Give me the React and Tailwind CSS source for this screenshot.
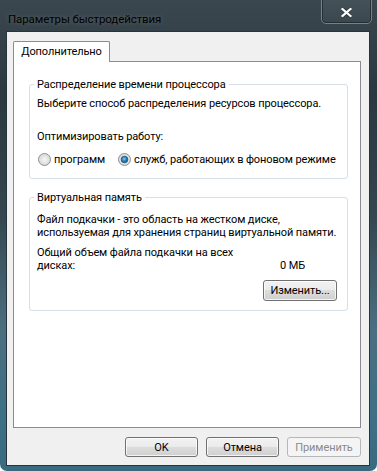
import React from "react";

function Radio({ checked }) {
  return (
    <svg width="13" height="13" viewBox="0 0 13 13" className="shrink-0">
      <defs>
        <radialGradient id={checked ? "rgc" : "rgu"} cx="0.5" cy="0.5" r="0.6">
          <stop offset="0" stopColor="#f6f6f6" />
          <stop offset="0.7" stopColor="#dcdcdc" />
          <stop offset="1" stopColor="#f2f2f2" />
        </radialGradient>
        <radialGradient id="dot" cx="0.45" cy="0.4" r="0.6">
          <stop offset="0" stopColor="#8fd0f5" />
          <stop offset="0.5" stopColor="#2f86c3" />
          <stop offset="1" stopColor="#1b5a8e" />
        </radialGradient>
      </defs>
      <circle cx="6.5" cy="6.5" r="6" fill={`url(#${checked ? "rgc" : "rgu"})`} stroke="#8d8f91" strokeWidth="1" />
      {checked && <circle cx="6.5" cy="6.5" r="3.3" fill="url(#dot)" stroke="#1f4e7a" strokeWidth="0.8" />}
    </svg>
  );
}

export default function App() {
  return (
    <div className="w-[377px] h-[471px] bg-white font-['Roboto',sans-serif] text-[11px] tracking-[-0.1px] leading-[13px] text-black whitespace-nowrap">
      <div className="relative w-[377px] h-[471px] flex flex-col pl-[6px] pr-[7px] rounded-b-[7px] bg-[linear-gradient(180deg,#3a474e_0%,#2b383f_20%,#33454e_45%,#4b6f80_70%,#3d6f86_90%,#3a6a80_100%)]">
        <div className="h-[31px] pl-[2px] pt-[12px] text-[11.5px] leading-[15px] text-black [text-shadow:0_0_5px_rgba(200,190,180,0.35)]">
          Параметры быстродействия
        </div>
        <div className="absolute right-[5px] top-[-2px] w-[51px] h-[26px] rounded-b-[5px] border border-[#75828a] bg-[linear-gradient(180deg,rgba(255,255,255,0.06),rgba(255,255,255,0.02))] shadow-[inset_0_0_0_1px_rgba(20,30,35,0.6)] flex items-center justify-center pt-[2px]">
          <svg width="11" height="9" viewBox="0 0 11 9">
            <path d="M1.5 1 L9.5 8 M9.5 1 L1.5 8" stroke="#2a3338" strokeWidth="3.6" strokeLinecap="square" />
            <path d="M1.5 1 L9.5 8 M9.5 1 L1.5 8" stroke="#ffffff" strokeWidth="2.2" strokeLinecap="square" />
          </svg>
        </div>
        <div className="h-[435px] border border-[#27343b] bg-[#f0f0f0] flex flex-col pt-[9px] pl-[6px] pr-[8px] pb-[8px]">
          <div className="flex h-[21px] -mb-px">
            <div className="relative z-10 w-[97px] h-[21px] border border-b-0 border-[#898c95] rounded-t-[2px] bg-white flex items-center justify-center pb-[1px]">
              Дополнительно
            </div>
          </div>
          <div className="h-[367px] border border-[#898c95] bg-white pt-[16px] pl-[15px] pr-[12px]">
            <fieldset className="min-w-0 border border-[#d5dfe5] rounded-[3px] px-0 pb-[12px]">
              <legend className="ml-[4px] px-[3px] leading-[13px]">Распределение времени процессора</legend>
              <div className="px-[7px] pt-[6px]">
                <div>Выберите способ распределения ресурсов процессора.</div>
                <div className="mt-[20px]">Оптимизировать работу:</div>
                <div className="mt-[10px] flex items-center h-[13px]">
                  <div className="w-[81px] flex items-center gap-[3px] pl-[1px]">
                    <Radio checked={false} />
                    <span>программ</span>
                  </div>
                  <div className="flex items-center gap-[3px]">
                    <Radio checked={true} />
                    <span>служб, работающих в фоновом режиме</span>
                  </div>
                </div>
              </div>
            </fieldset>
            <fieldset className="min-w-0 mt-[12px] border border-[#d5dfe5] rounded-[3px] px-0 pb-[9px]">
              <legend className="ml-[4px] px-[3px] leading-[13px]">Виртуальная память</legend>
              <div className="px-[7px] pt-[9px]">
                <div>Файл подкачки - это область на жестком диске,</div>
                <div>используемая для хранения страниц виртуальной памяти.</div>
                <div className="mt-[7px] w-[268px] flex items-end justify-between">
                  <div className="w-[210px]">
                    <div>Общий объем файла подкачки на всех</div>
                    <div>дисках:</div>
                  </div>
                  <div>0 МБ</div>
                </div>
                <div className="mt-[8px] flex justify-end pr-[3px]">
                  <div className="w-[74px] h-[21px] flex items-center justify-center rounded-[3px] border border-[#707070] bg-[linear-gradient(180deg,#f2f2f2_0%,#ebebeb_50%,#dddddd_50%,#cfcfcf_100%)] shadow-[inset_0_0_0_1px_rgba(255,255,255,0.75)]">
                    Изменить...
                  </div>
                </div>
              </div>
            </fieldset>
          </div>
          <div className="mt-[9px] flex justify-end gap-[8px] pr-[0px]">
            <div className="w-[73px] h-[20px] flex items-center justify-center rounded-[3px] border border-[#707070] bg-[linear-gradient(180deg,#f2f2f2_0%,#ebebeb_50%,#dddddd_50%,#cfcfcf_100%)] shadow-[inset_0_0_0_1px_rgba(255,255,255,0.75)]">
              OK
            </div>
            <div className="w-[73px] h-[20px] flex items-center justify-center rounded-[3px] border border-[#707070] bg-[linear-gradient(180deg,#f2f2f2_0%,#ebebeb_50%,#dddddd_50%,#cfcfcf_100%)] shadow-[inset_0_0_0_1px_rgba(255,255,255,0.75)]">
              Отмена
            </div>
            <div className="w-[74px] h-[20px] flex items-center justify-center rounded-[3px] border border-[#b5b8ba] bg-[#f4f4f4] text-[#8a8a8a]">
              Применить
            </div>
          </div>
        </div>
      </div>
    </div>
  );
}
